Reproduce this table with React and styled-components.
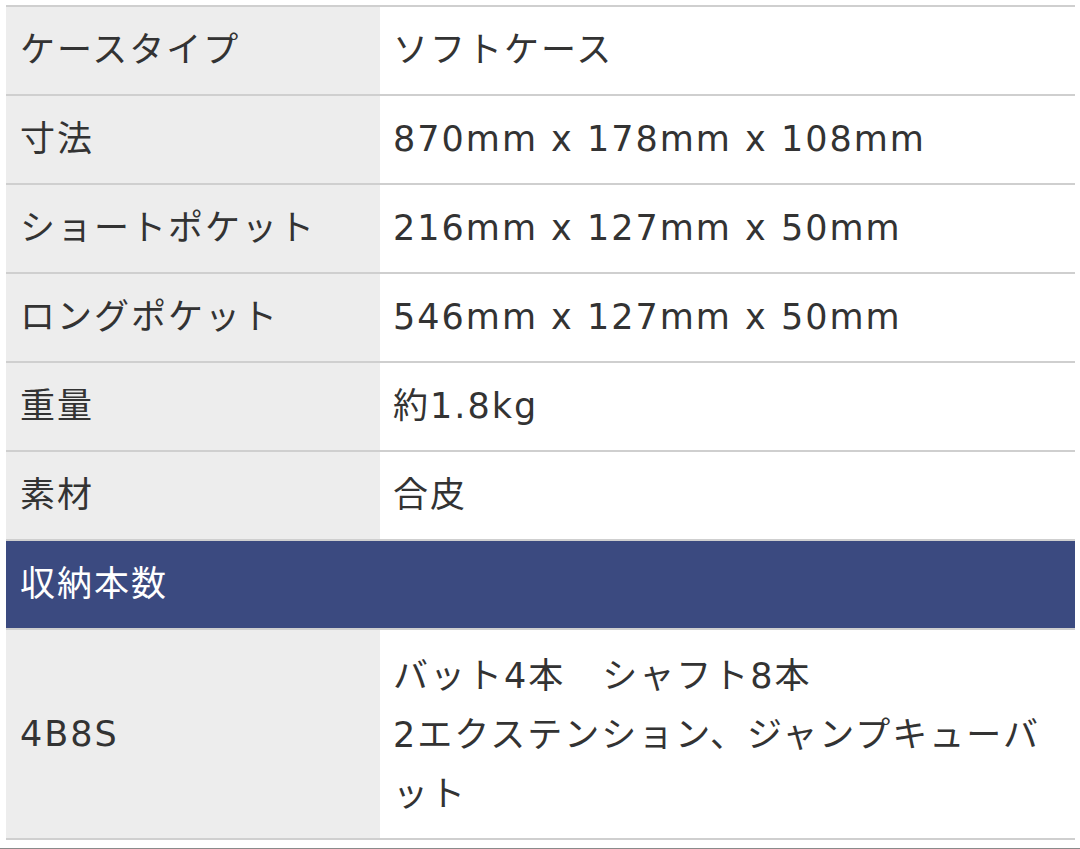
import React from 'react';
import styled, { createGlobalStyle } from 'styled-components';

const GlobalStyle = createGlobalStyle`
  html, body {
    margin: 0;
    padding: 0;
    background: #ffffff;
  }
  body {
    font-family: "DejaVu Sans", "Noto Sans CJK JP", sans-serif;
    color: #333333;
  }
`;

const Page = styled.div`
  width: 1080px;
  height: 849px;
  overflow: hidden;
  padding: 5px 5px 0 6px;
  box-sizing: border-box;
  border-bottom: 1px solid #8a8a8a;
`;

const Table = styled.table`
  width: 100%;
  border-collapse: collapse;
  border-top: 2px solid #cfcfcf;
`;

const Row = styled.tr`
  border-bottom: 2px solid #cfcfcf;
`;

const cellText = `
  font-size: 35px;
  letter-spacing: 2px;
  line-height: 59px;
  padding: 14px 13px;
`;

const Label = styled.th`
  ${cellText}
  width: 374px;
  box-sizing: border-box;
  background: #ededed;
  text-align: left;
  font-weight: 400;
  vertical-align: middle;
  color: #333333;
  padding-left: 14px;
`;

const Value = styled.td`
  ${cellText}
  background: #ffffff;
  vertical-align: middle;
  color: #333333;
  padding-top: ${(p) => (p.$tall ? '17px' : '14px')};
`;

const HeadCell = styled.th`
  ${cellText}
  background: #3b4a80;
  color: #ffffff;
  text-align: left;
  font-weight: 400;
  padding: 14px 14px;
`;

const specs = [
  ['ケースタイプ', 'ソフトケース'],
  ['寸法', '870mm x 178mm x 108mm'],
  ['ショートポケット', '216mm x 127mm x 50mm'],
  ['ロングポケット', '546mm x 127mm x 50mm'],
  ['重量', '約1.8kg'],
  ['素材', '合皮'],
];

export default function App() {
  return (
    <>
      <GlobalStyle />
      <Page>
        <Table>
          <tbody>
            {specs.map(([k, v]) => (
              <Row key={k}>
                <Label>{k}</Label>
                <Value>{v}</Value>
              </Row>
            ))}
            <Row>
              <HeadCell colSpan={2}>収納本数</HeadCell>
            </Row>
            <Row>
              <Label>4B8S</Label>
              <Value $tall>
                バット4本　シャフト8本
                <br />
                2エクステンション、ジャンプキューバ
                <br />
                ット
              </Value>
            </Row>
          </tbody>
        </Table>
      </Page>
    </>
  );
}
